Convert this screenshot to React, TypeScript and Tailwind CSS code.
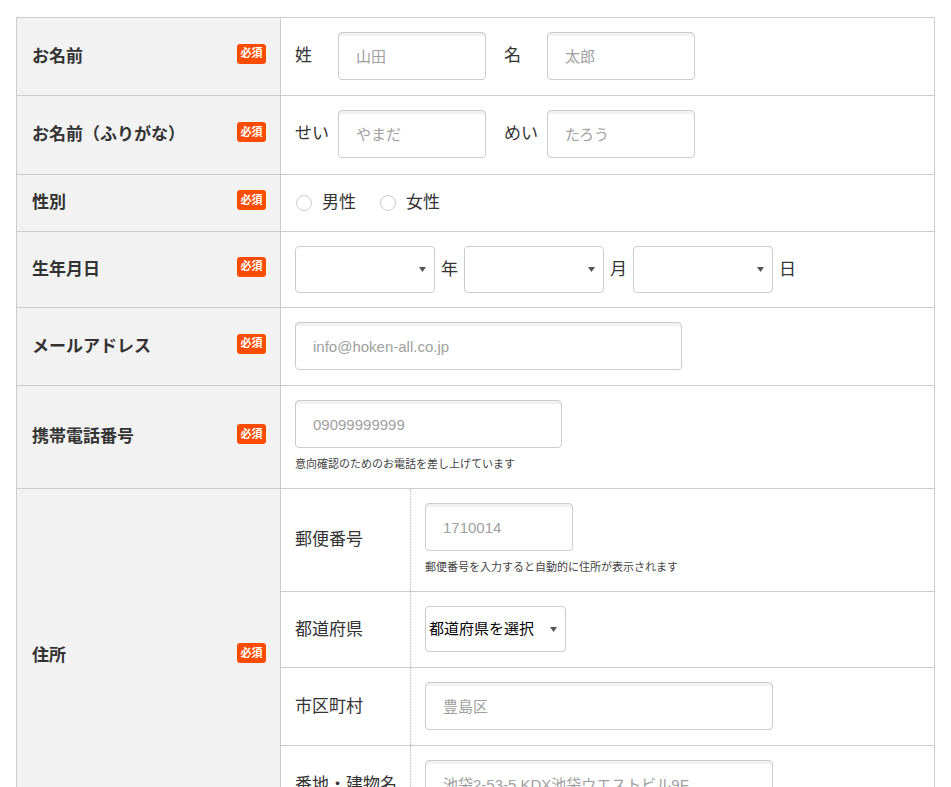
import React from "react";

const Badge = () => (
  <span className="mb-[6px] inline-flex h-[20px] w-[29px] shrink-0 items-center justify-center rounded-[3px] bg-[#ff4c00] text-[11px] font-bold leading-none text-white">
    必須
  </span>
);

const Label = ({ children }: { children: React.ReactNode }) => (
  <div className="flex w-[264px] shrink-0 items-center justify-between border-r border-[#ccc] bg-[#f2f2f2] pl-[15px] pr-[14px] text-[17px] font-bold text-[#333]">
    <span>{children}</span>
    <Badge />
  </div>
);

const TextInput = ({ placeholder, w }: { placeholder: string; w: string }) => (
  <input
    type="text"
    placeholder={placeholder}
    className={`${w} h-[48px] rounded-[4px] border border-[#ccc] bg-white pl-[17px] text-[15px] text-[#333] shadow-[inset_0_3px_0_#f1f1f1] outline-none placeholder:text-[#a0a0a0]`}
  />
);

const Arrow = () => (
  <svg width="7" height="5" viewBox="0 0 7 5" className="shrink-0">
    <path d="M0 0 L7 0 L3.5 5 Z" fill="#555" />
  </svg>
);

const FakeSelect = ({ text, w, h }: { text?: string; w: string; h: string }) => (
  <div className={`${w} ${h} flex items-center justify-between rounded-[4px] border border-[#ccc] bg-white pl-[3px] pr-[8px] text-[15px] text-black`}>
    <span>{text ?? ""}</span>
    <Arrow />
  </div>
);

const Radio = ({ label }: { label: string }) => (
  <label className="flex items-center">
    <span className="h-[16px] w-[16px] rounded-full border border-[#ccc] bg-white" />
    <span className="ml-[10px]">{label}</span>
  </label>
);

const Note = ({ children }: { children: React.ReactNode }) => (
  <div className="mt-[8px] text-[11px] leading-[16px] text-[#444]">{children}</div>
);

const SubLabel = ({ children }: { children: React.ReactNode }) => (
  <div className="flex w-[130px] shrink-0 items-center border-r border-dotted border-[#bbb] pl-[14px] text-[17px] text-[#333]">
    {children}
  </div>
);

export default function App() {
  return (
    <div className="min-h-screen bg-white pl-[16px] pt-[17px] font-['Liberation_Sans','Noto_Sans_CJK_JP',sans-serif] text-[#333]">
      <div className="w-[919px] border border-[#ccc]">
        {/* お名前 */}
        <div className="flex">
          <Label>お名前</Label>
          <div className="flex flex-1 items-center pb-[15px] pl-[14px] pt-[14px] text-[17px]">
            <span className="w-[43px]">姓</span>
            <TextInput placeholder="山田" w="w-[148px]" />
            <span className="ml-[18px] w-[43px]">名</span>
            <TextInput placeholder="太郎" w="w-[148px]" />
          </div>
        </div>
        {/* ふりがな */}
        <div className="flex border-t border-[#ccc]">
          <Label>お名前（ふりがな）</Label>
          <div className="flex flex-1 items-center pb-[16px] pl-[14px] pt-[14px] text-[17px]">
            <span className="w-[43px]">せい</span>
            <TextInput placeholder="やまだ" w="w-[148px]" />
            <span className="ml-[18px] w-[43px]">めい</span>
            <TextInput placeholder="たろう" w="w-[148px]" />
          </div>
        </div>
        {/* 性別 */}
        <div className="flex border-t border-[#ccc]">
          <Label>性別</Label>
          <div className="flex flex-1 items-center gap-[24px] py-[14px] pl-[15px] text-[17px] leading-[28px]">
            <Radio label="男性" />
            <Radio label="女性" />
          </div>
        </div>
        {/* 生年月日 */}
        <div className="flex border-t border-[#ccc]">
          <Label>生年月日</Label>
          <div className="flex flex-1 items-center py-[14px] pl-[14px] text-[17px]">
            <FakeSelect w="w-[140px]" h="h-[47px]" />
            <span className="mx-[6px]">年</span>
            <FakeSelect w="w-[140px]" h="h-[47px]" />
            <span className="mx-[6px]">月</span>
            <FakeSelect w="w-[140px]" h="h-[47px]" />
            <span className="mx-[6px]">日</span>
          </div>
        </div>
        {/* メール */}
        <div className="flex border-t border-[#ccc]">
          <Label>メールアドレス</Label>
          <div className="flex flex-1 items-center pb-[15px] pl-[14px] pt-[14px]">
            <TextInput placeholder="info@hoken-all.co.jp" w="w-[387px]" />
          </div>
        </div>
        {/* 携帯電話番号 */}
        <div className="flex border-t border-[#ccc]">
          <Label>携帯電話番号</Label>
          <div className="flex flex-1 flex-col pb-[16px] pl-[14px] pt-[14px]">
            <TextInput placeholder="09099999999" w="w-[267px]" />
            <Note>意向確認のためのお電話を差し上げています</Note>
          </div>
        </div>
        {/* 住所 */}
        <div className="flex border-t border-[#ccc]">
          <Label>住所</Label>
          <div className="flex flex-1 flex-col">
            <div className="flex">
              <SubLabel>郵便番号</SubLabel>
              <div className="flex flex-1 flex-col pb-[16px] pl-[14px] pt-[14px]">
                <TextInput placeholder="1710014" w="w-[148px]" />
                <Note>郵便番号を入力すると自動的に住所が表示されます</Note>
              </div>
            </div>
            <div className="flex border-t border-[#ccc]">
              <SubLabel>都道府県</SubLabel>
              <div className="flex flex-1 items-center pb-[15px] pl-[14px] pt-[14px]">
                <FakeSelect text="都道府県を選択" w="w-[141px]" h="h-[46px]" />
              </div>
            </div>
            <div className="flex border-t border-[#ccc]">
              <SubLabel>市区町村</SubLabel>
              <div className="flex flex-1 items-center pb-[15px] pl-[14px] pt-[14px]">
                <TextInput placeholder="豊島区" w="w-[348px]" />
              </div>
            </div>
            <div className="flex border-t border-[#ccc]">
              <SubLabel>番地・建物名</SubLabel>
              <div className="flex flex-1 items-center pb-[15px] pl-[14px] pt-[14px]">
                <TextInput placeholder="池袋2-53-5 KDX池袋ウエストビル9F" w="w-[348px]" />
              </div>
            </div>
          </div>
        </div>
      </div>
    </div>
  );
}
